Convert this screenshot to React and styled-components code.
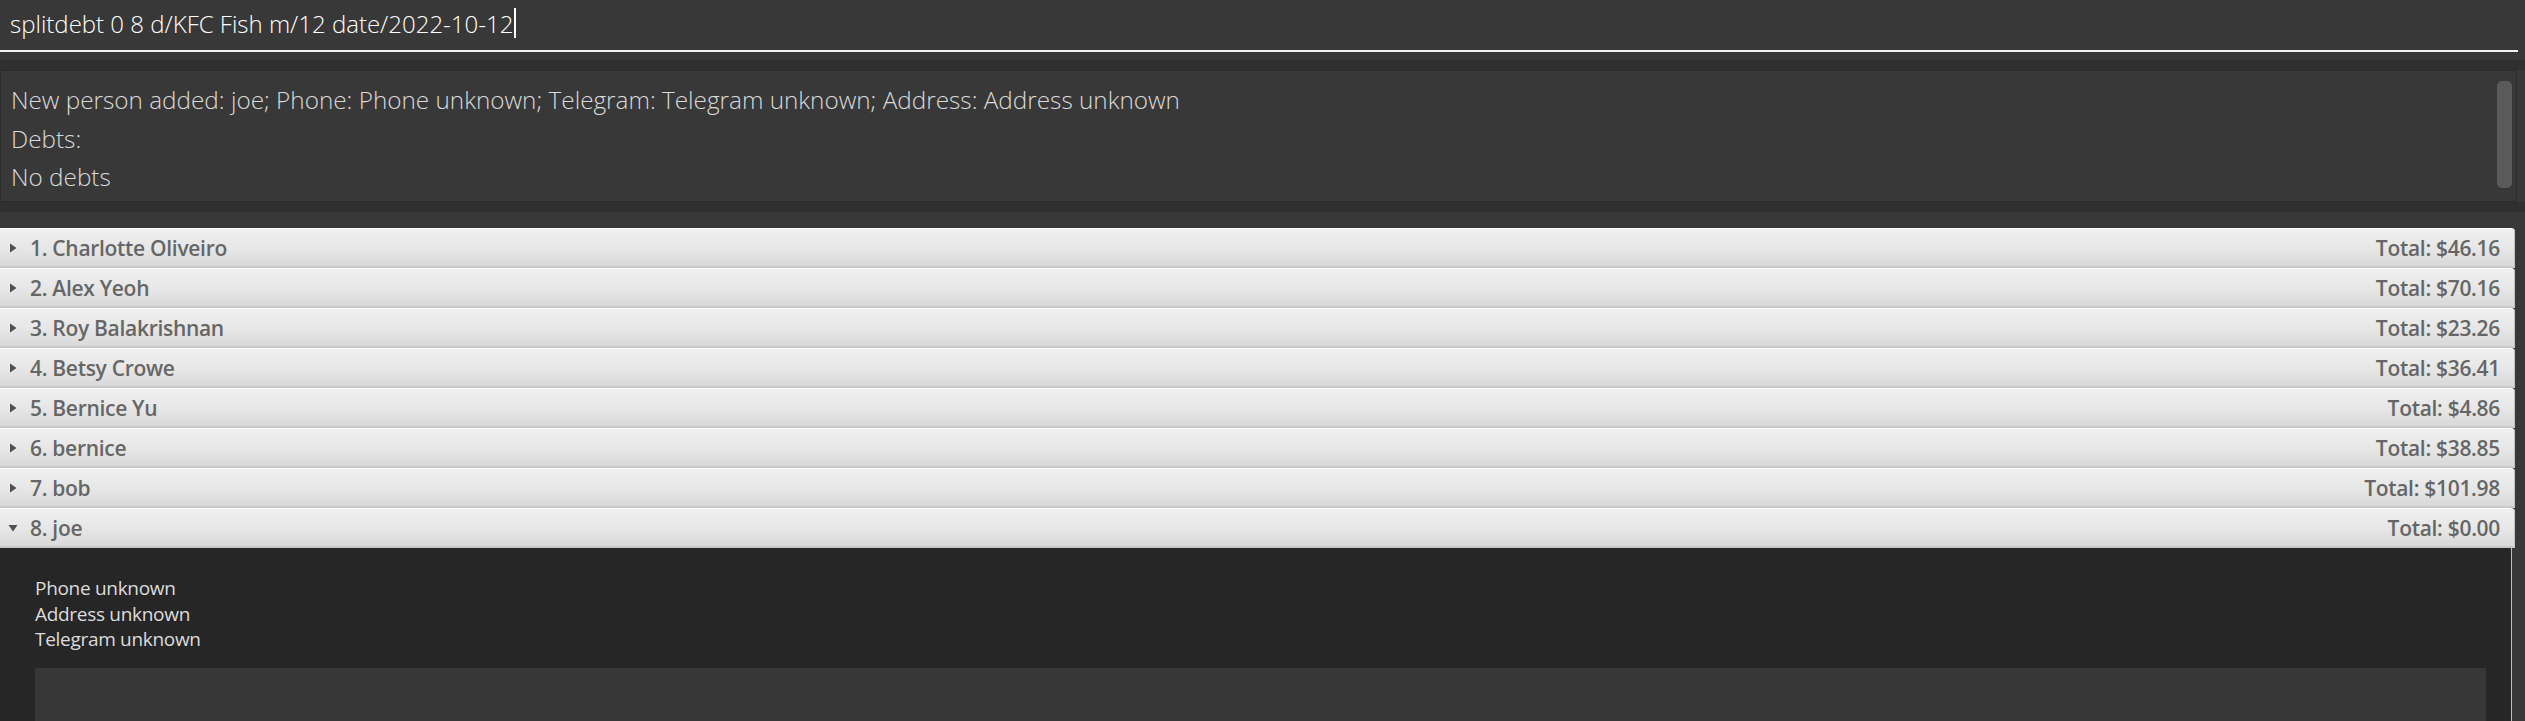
import React from "react";
import styled, { createGlobalStyle } from "styled-components";

const GlobalStyle = createGlobalStyle`
  html, body {
    margin: 0;
    padding: 0;
    background: #383838;
  }
  * {
    box-sizing: border-box;
  }
`;

const persons = [
  { name: "Charlotte Oliveiro", total: "46.16" },
  { name: "Alex Yeoh", total: "70.16" },
  { name: "Roy Balakrishnan", total: "23.26" },
  { name: "Betsy Crowe", total: "36.41" },
  { name: "Bernice Yu", total: "4.86" },
  { name: "bernice", total: "38.85" },
  { name: "bob", total: "101.98" },
  { name: "joe", total: "0.00", open: true },
];

function Arrow({ open }) {
  return (
    <ArrowIcon width="12" height="12" viewBox="0 0 12 12">
      {open ? (
        <path d="M1.5 3 L10.5 3 L6 9.5 Z" fill="#505050" />
      ) : (
        <path d="M3 1.5 L9.5 6 L3 10.5 Z" fill="#505050" />
      )}
    </ArrowIcon>
  );
}

export default function App() {
  return (
    <>
      <GlobalStyle />
      <Window>
        <CommandBox>
          <CommandText>
            splitdebt 0 8 d/KFC Fish m/12 date/2022-10-12
            <Caret />
          </CommandText>
        </CommandBox>

        <Band />
        <ResultBox>
          <ResultLine>
            New person added: joe; Phone: Phone unknown; Telegram: Telegram
            unknown; Address: Address unknown
          </ResultLine>
          <ResultLine>Debts:</ResultLine>
          <ResultLine>No debts</ResultLine>
          <ScrollThumb />
        </ResultBox>
        <Band $flush />

        <PersonList>
          {persons.map((p, i) => (
            <React.Fragment key={p.name}>
              <TitleRow>
                <Arrow open={p.open} />
                <Name>
                  {i + 1}. {p.name}
                </Name>
                <Total>Total: ${p.total}</Total>
              </TitleRow>
              {p.open && (
                <Details>
                  <DetailLine>Phone unknown</DetailLine>
                  <DetailLine>Address unknown</DetailLine>
                  <DetailLine>Telegram unknown</DetailLine>
                  <DebtBox />
                </Details>
              )}
            </React.Fragment>
          ))}
        </PersonList>
      </Window>
    </>
  );
}

const Window = styled.div`
  width: 2525px;
  height: 721px;
  overflow: hidden;
  background: #383838;
  font-family: "Open Sans", "Noto Sans", sans-serif;
`;

const CommandBox = styled.div`
  height: 52px;
  margin-right: 7px;
  padding: 0 0 4px 10px;
  border-bottom: 2px solid #f2f2f2;
  display: flex;
  align-items: center;
`;

const CommandText = styled.div`
  color: #ffffff;
  font-size: 24px;
  font-weight: 300;
  display: flex;
  align-items: center;
`;

const Caret = styled.span`
  display: inline-block;
  width: 2px;
  height: 30px;
  margin-left: 1px;
  background: #ffffff;
`;

const Band = styled.div`
  height: 10px;
  margin-top: ${(p) => (p.$flush ? "0" : "8px")};
  background: #303030;
`;

const ResultBox = styled.div`
  position: relative;
  height: 132px;
  margin-right: 8px;
  padding: 10px 0 0 10px;
  background: #383838;
  border: 1px solid #2c2c2c;
`;

const ResultLine = styled.div`
  color: #dadada;
  font-size: 24.3px;
  font-weight: 300;
  line-height: 38.5px;
`;

const ScrollThumb = styled.div`
  position: absolute;
  top: 10px;
  right: 4px;
  width: 15px;
  height: 107px;
  border-radius: 5px;
  background: #5a5a5a;
`;

const PersonList = styled.div`
  margin-top: 16px;
  margin-right: 10px;
  display: flex;
  flex-direction: column;
`;

const TitleRow = styled.div`
  height: 40px;
  flex-shrink: 0;
  display: flex;
  align-items: center;
  padding: 0 15px 0 7px;
  background: linear-gradient(#f0f0f0, #e6e6e6 55%, #d9d9d9);
  border-top: 1px solid #fafafa;
  border-bottom: 2px solid #c9c9c9;
  border-top-right-radius: 4px;
  box-shadow: inset -1px 0 0 #c4c4c4;
`;

const ArrowIcon = styled.svg`
  flex-shrink: 0;
  margin-right: 11px;
`;

const Name = styled.span`
  flex: 1;
  color: #666666;
  font-size: 21px;
  font-weight: 600;
  letter-spacing: -0.3px;
`;

const Total = styled.span`
  color: #666666;
  font-size: 21px;
  font-weight: 600;
  letter-spacing: -0.3px;
`;

const Details = styled.div`
  flex-shrink: 0;
  background: #262626;
  margin-right: 3px;
  border-right: 1px solid #bdbdbd;
  padding: 28px 25px 0 35px;
  height: 200px;
`;

const DetailLine = styled.div`
  color: #dcdcdc;
  font-size: 19px;
  line-height: 25.5px;
  letter-spacing: -0.3px;
`;

const DebtBox = styled.div`
  margin-top: 15px;
  height: 120px;
  background: #373737;
`;
